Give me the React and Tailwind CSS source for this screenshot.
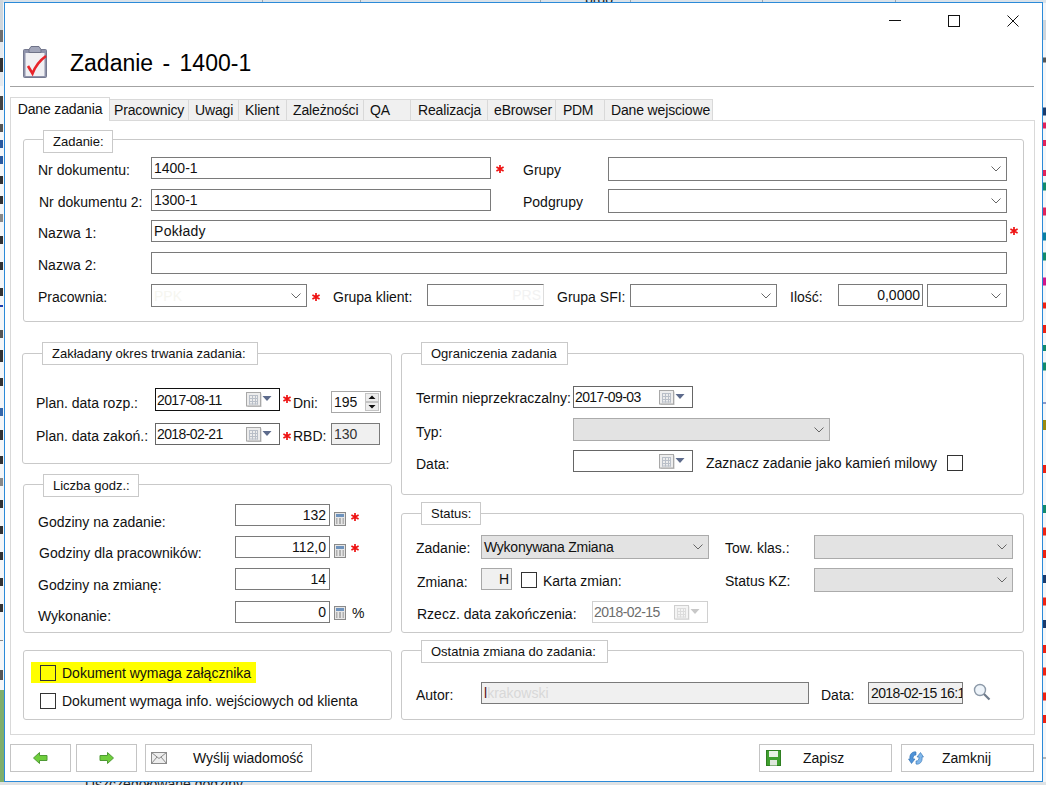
import React from "react";

const Chevron = ({ c = "#666" }) => (
  <svg width="10" height="6" viewBox="0 0 10 6" className="shrink-0"><path d="M0.5 0.5 L5 5 L9.5 0.5" fill="none" stroke={c} strokeWidth="1" /></svg>
);

const Box = ({ className = "", children }) => (
  <div className={"flex shrink-0 items-center overflow-hidden whitespace-nowrap border border-[#7a7a7a] pl-[2px] pr-[2px] " + className}>{children}</div>
);

const Select = ({ className = "", children }) => (
  <div className={"flex shrink-0 items-center justify-between border border-[#7a7a7a] pl-[2px] pr-[5px] " + className}>
    <span className="whitespace-nowrap">{children}</span>
    <Chevron />
  </div>
);

const GraySelect = ({ className = "", children }) => (
  <div className={"flex shrink-0 items-center justify-between border border-[#ababab] bg-[#e3e3e3] pl-[2px] pr-[5px] " + className}>
    <span className="whitespace-nowrap tracking-[-0.25px]">{children}</span>
    <Chevron />
  </div>
);

const Star = ({ className = "" }) => (
  <span className={"relative block h-[10px] w-[8px] shrink-0 " + className}>
    <svg width="8" height="8" viewBox="0 0 8 8" className="absolute left-0 top-[1px]">
      <path d="M4 0 V8 M0.4 2 L7.6 6 M7.6 2 L0.4 6" stroke="#ee1111" strokeWidth="1.7" />
    </svg>
  </span>
);

const Check = ({ className = "" }) => <span className={"block h-4 w-4 shrink-0 border border-[#333] " + className} />;

const CalIcon = ({ dim }) => (
  <svg width="26" height="15" viewBox="0 0 26 15" className="shrink-0">
    <rect x="1.5" y="1.5" width="14" height="13.5" fill={dim ? "#e8e8e8" : "#c4c4c4"} />
    <rect x="0.5" y="0.5" width="14" height="13.5" fill={dim ? "#f4f4f4" : "#ededed"} stroke={dim ? "#cfcfcf" : "#a8a8a8"} />
    <path d="M3 3.5 H12 M3 6.5 H12 M3 9.5 H12 M3 12 H12 M3.5 3 V12.5 M6.5 3 V12.5 M9.5 3 V12.5 M11.5 3 V12.5" stroke={dim ? "#dcdcdc" : "#b9bfc8"} strokeWidth="1" />
    <path d="M16.5 4 H25.5 L21 9 Z" fill={dim ? "#c8c8c8" : "#5d6b8c"} />
  </svg>
);

const DateBox = ({ className = "", children, dim }) => (
  <div className={"flex shrink-0 items-center justify-between border pl-[1px] pr-[7px] " + className}>
    <span className="whitespace-nowrap tracking-[-0.6px]">{children}</span>
    <CalIcon dim={dim} />
  </div>
);

const Calc = ({ className = "" }) => (
  <svg width="12" height="14" viewBox="0 0 12 14" className={"shrink-0 " + className}>
    <rect x="0.5" y="0.5" width="11" height="13" fill="#e6e6e6" stroke="#8a8a8a" />
    <rect x="2" y="2" width="8" height="3" fill="#6f93bd" />
    <path d="M2 7 H3.5 M5 7 H7 M8.5 7 H10 M2 9 H3.5 M5 9 H7 M8.5 9 H10 M2 11 H3.5 M5 11 H7 M8.5 11 H10" stroke="#7b7b7b" strokeWidth="1" />
  </svg>
);

const Group = ({ legend, legendClass = "", className = "", children }) => (
  <div className={"relative shrink-0 rounded-[3px] border border-[#c9c9c9] " + className}>
    <div className={"absolute flex h-[23px] items-center whitespace-nowrap border border-[#c9c9c9] bg-white pl-[9px] text-[13px] " + legendClass}>{legend}</div>
    {children}
  </div>
);

const Row = ({ className = "", children }) => <div className={"flex items-start " + className}>{children}</div>;

const tabs = [
  ["Pracownicy", "w-[79px] pl-[4px]"],
  ["Uwagi", "w-[50px] pl-[6px]"],
  ["Klient", "w-[48px] pl-[6px]"],
  ["Zależności", "w-[77px] pl-[6px]"],
  ["QA", "w-[47px] pl-[6px]"],
  ["Realizacja", "w-[77px] pl-[7px]"],
  ["eBrowser", "w-[68px] pl-[6px]"],
  ["PDM", "w-[49px] pl-[7px] tracking-[-0.3px]"],
  ["Dane wejsciowe", "w-[108px] pl-[6px]"],
];

const Btn = ({ className = "", children }) => (
  <div className={"relative flex h-[28px] shrink-0 items-center border border-[#c4c4c4] bg-white " + className}>{children}</div>
);

function Backdrop() {
  const left = [
    [0, 30, "#cfd6dc"], [30, 12, "#6e6e6e"], [42, 44, "#e4e9ee"], [58, 14, "#333"], [96, 14, "#444"],
    [124, 8, "#555"], [140, 8, "#2a5aa0"], [156, 8, "#2a5aa0"], [176, 8, "#333"], [196, 8, "#333"],
    [214, 8, "#888"], [236, 8, "#333"], [262, 8, "#333"], [288, 8, "#333"], [305, 2, "#1a3fb0"],
    [330, 8, "#555"], [350, 12, "#333"], [378, 8, "#333"], [408, 8, "#3366aa"], [430, 10, "#333"],
    [456, 8, "#333"], [478, 8, "#888"], [500, 8, "#333"], [526, 8, "#333"], [552, 8, "#333"],
    [578, 8, "#333"], [604, 8, "#333"], [640, 1, "#888"], [670, 10, "#555"],
  ];
  const right = [
    [0, 20, "#cfd6dc"], [30, 5, "#555"], [70, 8, "#1b3a6b"], [82, 6, "#e0225a"], [96, 6, "#e0225a"],
    [120, 6, "#e0225a"], [130, 8, "#138a6b"], [150, 8, "#e0225a"], [170, 8, "#0b7fa0"], [186, 8, "#138a6b"],
    [206, 8, "#d0158a"], [226, 6, "#ee2211"], [244, 8, "#ee2211"], [260, 6, "#138a6b"], [274, 8, "#138a6b"],
    [306, 1, "#223f9a"], [320, 10, "#9a8a10"], [356, 8, "#ee2211"], [388, 8, "#138a6b"], [406, 8, "#ee2211"],
    [424, 8, "#ee2211"], [444, 8, "#1b3a6b"], [462, 8, "#ee2211"], [480, 8, "#1b3a6b"], [500, 8, "#ee2211"],
    [518, 8, "#ee2211"], [538, 8, "#ee2211"], [556, 8, "#ee2211"], [590, 1, "#777"], [640, 2, "#666"],
  ];
  return (
    <svg width="1046" height="785" viewBox="0 0 1046 785" className="absolute left-0 top-0">
      <rect width="1046" height="785" fill="#f4f6f8" />
      <rect width="1046" height="3" fill="#d9e2ea" />
      <rect x="0" y="690" width="4" height="95" fill="#7fae6a" />
      {left.map(([y, h, c], i) => <rect key={i} x="0" y={y} width="3" height={h} fill={c} />)}
      {right.map(([y, h, c], i) => <rect key={i} x="1043" y={y * 1.25 + 20} width="3" height={h} fill={c} />)}
      {[262, 360, 540, 630, 762, 895].map((x) => <rect key={x} x={x} y="0" width="1" height="3" fill="#9aa5ae" />)}
      <rect x="0" y="782" width="1046" height="3" fill="#dfe2e4" />
    </svg>
  );
}

export default function App() {
  return (
    <div className="relative h-[785px] w-[1046px] overflow-hidden bg-white font-['Liberation_Sans',Arial,sans-serif] text-[14px] leading-4 text-[#111]">
      <Backdrop />
      <span className="absolute left-[85px] top-[776px] whitespace-nowrap text-[#222]">Uszczegółowane godziny</span>
      <span className="absolute left-[585px] top-[-9px] text-[#222]">brdo:</span>

      {/* window */}
      <div className="absolute left-[4px] top-[2px] flex h-[780px] w-[1039px] flex-col border border-[#2b8ad8] bg-white">
        {/* caption */}
        <div className="flex h-[36px] shrink-0 justify-end">
          {[
            <svg key="a" width="12" height="12" viewBox="0 0 12 12"><path d="M0 5.5 H12" stroke="#111" strokeWidth="1" /></svg>,
            <svg key="b" width="12" height="12" viewBox="0 0 12 12"><rect x="0.5" y="0.5" width="11" height="11" fill="none" stroke="#111" /></svg>,
            <svg key="c" width="12" height="12" viewBox="0 0 12 12"><path d="M0.5 0.5 L11.5 11.5 M11.5 0.5 L0.5 11.5" stroke="#111" strokeWidth="1" /></svg>,
          ].map((ic, i) => (
            <div key={i} className="flex w-[59px] items-center justify-center">{ic}</div>
          ))}
        </div>
        <div className="flex h-[47px] shrink-0 items-start pl-[18px] pt-[7px]">
          <svg width="24" height="32" viewBox="0 0 24 32" className="shrink-0">
            <rect x="0.5" y="3.5" width="23" height="28" rx="1" fill="#8f93ab" stroke="#75798f" />
            <rect x="2.5" y="7" width="19" height="23" fill="#f0f0f3" />
            <path d="M6 3.5 L8 0.5 H16 L18 3.5 V6.5 H6 Z" fill="#a2a6ba" stroke="#6f7388" />
            <path d="M5 20 L9.5 27.5 C12 21 16 15 23 10" fill="none" stroke="#e8242a" strokeWidth="2.6" />
          </svg>
          <h1 className="ml-[23px] mt-[1px] text-[23px] font-normal leading-8 text-black [word-spacing:3px]">Zadanie - 1400-1</h1>
        </div>
        <div className="ml-[5px] mr-[8px] h-px shrink-0 bg-[#a3a3a3]" />

        {/* tabs */}
        <div className="ml-[5px] mt-[10px] flex h-[23px] shrink-0 items-end tracking-[-0.15px]">
          <div className="relative z-10 -mb-px flex h-[24px] w-[100px] items-center justify-center border-x border-t border-[#d9d9d9] bg-white pb-[2px]">Dane zadania</div>
          {tabs.map(([t, w]) => (
            <div key={t} className={"flex h-[21px] items-center justify-start whitespace-nowrap border-r border-t border-[#d9d9d9] bg-[#f0f0f0] " + w}>{t}</div>
          ))}
        </div>

        {/* panel */}
        <div className="ml-[5px] h-[615px] w-[1025px] shrink-0 border border-[#d9d9d9] pl-[12px] pt-[18px]">
          <Group legend="Zadanie:" legendClass="-top-[10px] left-[19px] w-[70px]" className="h-[183px] w-[1001px] pl-[14px] pt-[17px]">
            <Row className="h-[32px]">
              <span className="mt-[5px] w-[113px] shrink-0">Nr dokumentu:</span>
              <Box className="h-[22px] w-[340px]">1400-1</Box>
              <Star className="ml-[5px] mt-[7px]" />
              <span className="ml-[19px] mt-[5px] w-[85px] shrink-0">Grupy</span>
              <Select className="h-[24px] w-[399px]" />
            </Row>
            <Row className="h-[31px]">
              <span className="ml-px mt-[5px] w-[112px] shrink-0">Nr dokumentu 2:</span>
              <Box className="h-[22px] w-[340px]">1300-1</Box>
              <span className="ml-[32px] mt-[5px] w-[85px] shrink-0">Podgrupy</span>
              <Select className="h-[24px] w-[399px]" />
            </Row>
            <Row className="h-[32px]">
              <span className="mt-[5px] w-[113px] shrink-0">Nazwa 1:</span>
              <Box className="h-[22px] w-[856px] tracking-[0.3px]">Pokłady</Box>
              <Star className="ml-[3px] mt-[6px]" />
            </Row>
            <Row className="h-[32px]">
              <span className="mt-[5px] w-[113px] shrink-0">Nazwa 2:</span>
              <Box className="h-[22px] w-[856px]" />
            </Row>
            <Row>
              <span className="mt-[5px] w-[113px] shrink-0">Pracownia:</span>
              <Select className="h-[23px] w-[156px]"><span className="text-[#f6f6f0]">PPK</span></Select>
              <Star className="ml-[5px] mt-[8px]" />
              <span className="ml-[13px] mt-[5px] w-[94px] shrink-0">Grupa klient:</span>
              <Box className="h-[22px] w-[117px] justify-end border-r-[#dddddd] text-[#f2f2f2]">PRS</Box>
              <span className="ml-[13px] mt-[5px] w-[73px] shrink-0">Grupa SFI:</span>
              <Select className="h-[23px] w-[147px]" />
              <span className="ml-[13px] mt-[5px] w-[48px] shrink-0">Ilość:</span>
              <Box className="h-[22px] w-[85px] justify-end">0,0000</Box>
              <Select className="ml-[4px] h-[23px] w-[80px]" />
            </Row>
          </Group>

          <div className="-ml-px mt-[31px] flex gap-[9px]">
            {/* left column */}
            <div className="flex w-[370px] shrink-0 flex-col">
              <Group legend="Zakładany okres trwania zadania:" legendClass="-top-[12px] left-[19px] w-[216px]" className="h-[111px] w-[370px] pl-[13px] pt-[34px]">
                <Row className="h-[35px]">
                  <span className="mt-[7px] w-[119px] shrink-0">Plan. data rozp.:</span>
                  <DateBox className="h-[23px] w-[125px] border-[#111]">2017-08-11</DateBox>
                  <Star className="ml-[3px] mt-[6px]" />
                  <span className="ml-[2px] mt-[7px] w-[38px] shrink-0">Dni:</span>
                  <div className="mt-[3px] flex h-[22px] w-[50px] shrink-0 items-center justify-between border border-[#a8a8a8] pl-[2px] pr-px">
                    <span>195</span>
                    <svg width="14" height="18" viewBox="0 0 14 18" className="shrink-0">
                      <rect x="0.5" y="0.5" width="13" height="8" fill="#ededed" stroke="#c4c4c4" />
                      <rect x="0.5" y="9.5" width="13" height="8" fill="#ededed" stroke="#c4c4c4" />
                      <path d="M7 2.5 L10.5 6 H3.5 Z M7 15.5 L10.5 12 H3.5 Z" fill="#111" />
                    </svg>
                  </div>
                </Row>
                <Row>
                  <span className="mt-[5px] w-[119px] shrink-0">Plan. data zakoń.:</span>
                  <DateBox className="h-[22px] w-[125px] border-[#666]">2018-02-21</DateBox>
                  <Star className="ml-[3px] mt-[8px]" />
                  <span className="ml-[2px] mt-[5px] w-[38px] shrink-0">RBD:</span>
                  <Box className="h-[22px] w-[49px] bg-[#f0f0f0] text-[#333]">130</Box>
                </Row>
              </Group>

              <Group legend="Liczba godz.:" legendClass="-top-[11px] left-[19px] w-[96px]" className="ml-px mt-[20px] h-[149px] w-[369px] pl-[14px] pt-[19px]">
                <Row className="h-[32px]">
                  <span className="mt-[10px] w-[197px] shrink-0">Godziny na zadanie:</span>
                  <Box className="h-[22px] w-[95px] justify-end pr-[3px]">132</Box>
                  <Calc className="ml-[4px] mt-[8px]" />
                  <Star className="ml-[5px] mt-[8px]" />
                </Row>
                <Row className="h-[32px]">
                  <span className="ml-px mt-[9px] w-[196px] shrink-0">Godziny dla pracowników:</span>
                  <Box className="h-[22px] w-[95px] justify-end pr-[3px]">112,0</Box>
                  <Calc className="ml-[4px] mt-[8px]" />
                  <Star className="ml-[5px] mt-[7px]" />
                </Row>
                <Row className="h-[33px]">
                  <span className="mt-[9px] w-[197px] shrink-0">Godziny na zmianę:</span>
                  <Box className="h-[22px] w-[95px] justify-end pr-[3px]">14</Box>
                </Row>
                <Row>
                  <span className="mt-[7px] w-[197px] shrink-0">Wykonanie:</span>
                  <Box className="h-[22px] w-[95px] justify-end pr-[3px]">0</Box>
                  <Calc className="ml-[4px] mt-[5px]" />
                  <span className="ml-[6px] mt-[4px]">%</span>
                </Row>
              </Group>

              <div className="ml-px mt-[17px] h-[70px] w-[369px] rounded-[3px] border border-[#c9c9c9] pl-[7px] pt-[11px]">
                <div className="flex h-[21px] w-[225px] items-center gap-[6px] bg-[#ffff00] pl-[9px]">
                  <Check />
                  <span className="whitespace-nowrap">Dokument wymaga załącznika</span>
                </div>
                <div className="mt-[7px] flex h-[21px] items-center gap-[6px] pl-[9px]">
                  <Check />
                  <span className="whitespace-nowrap">Dokument wymaga info. wejściowych od klienta</span>
                </div>
              </div>
            </div>

            {/* right column */}
            <div className="flex w-[623px] shrink-0 flex-col">
              <Group legend="Ograniczenia zadania" legendClass="-top-[12px] left-[19px] w-[147px]" className="h-[142px] w-[623px] pl-[14px] pt-[32px]">
                <Row className="h-[32px]">
                  <span className="mt-[4px] w-[157px] shrink-0 whitespace-nowrap">Termin nieprzekraczalny:</span>
                  <DateBox className="h-[22px] w-[120px] border-[#666]">2017-09-03</DateBox>
                </Row>
                <Row className="h-[32px]">
                  <span className="mt-[6px] w-[157px] shrink-0">Typ:</span>
                  <GraySelect className="h-[23px] w-[257px]" />
                </Row>
                <Row>
                  <span className="mt-[6px] w-[157px] shrink-0">Data:</span>
                  <DateBox className="h-[22px] w-[120px] border-[#666]" />
                  <span className="ml-[13px] mt-[5px] w-[241px] shrink-0 whitespace-nowrap">Zaznacz zadanie jako kamień milowy</span>
                  <Check className="mt-[5px]" />
                </Row>
              </Group>

              <Group legend="Status:" legendClass="-top-[12px] left-[19px] w-[60px]" className="mt-[18px] h-[120px] w-[623px] pl-[14px] pt-[21px]">
                <Row className="h-[33px]">
                  <span className="mt-[5px] w-[65px] shrink-0">Zadanie:</span>
                  <GraySelect className="h-[24px] w-[228px]">Wykonywana Zmiana</GraySelect>
                  <span className="ml-[16px] mt-[5px] w-[89px] shrink-0">Tow. klas.:</span>
                  <GraySelect className="h-[24px] w-[199px]" />
                </Row>
                <Row className="h-[33px]">
                  <span className="ml-px mt-[6px] w-[64px] shrink-0">Zmiana:</span>
                  <Box className="h-[22px] w-[31px] justify-end border-[#a8a8a8] bg-[#f0f0f0]">H</Box>
                  <Check className="ml-[9px] mt-[4px]" />
                  <span className="ml-[6px] mt-[5px] w-[182px] shrink-0">Karta zmian:</span>
                  <span className="mt-[5px] w-[89px] shrink-0">Status KZ:</span>
                  <GraySelect className="h-[24px] w-[199px]" />
                </Row>
                <Row>
                  <span className="ml-px mt-[5px] w-[175px] shrink-0 whitespace-nowrap">Rzecz. data zakończenia:</span>
                  <DateBox dim className="h-[22px] w-[116px] border-[#d0d0d0] text-[#6d6d6d]">2018-02-15</DateBox>
                </Row>
              </Group>

              <Group legend="Ostatnia zmiana do zadania:" legendClass="-top-[11px] left-[19px] w-[187px]" className="mt-[17px] h-[70px] w-[623px] pl-[14px] pt-[31px]">
                <Row>
                  <span className="mt-[5px] w-[65px] shrink-0">Autor:</span>
                  <Box className="h-[22px] w-[328px] bg-[#f0f0f0] text-[#d8d8d8]"><span className="text-[#5a1020]">l</span>krakowski</Box>
                  <span className="ml-[12px] mt-[5px] w-[47px] shrink-0">Data:</span>
                  <Box className="h-[22px] w-[95px] bg-[#f0f0f0] tracking-[-0.6px]">2018-02-15 16:1</Box>
                  <svg width="18" height="18" viewBox="0 0 18 18" className="ml-[10px] mt-[1px] shrink-0">
                    <circle cx="7" cy="7" r="5.5" fill="#eef4fa" stroke="#8c99a8" strokeWidth="1.4" />
                    <path d="M11 11 L16.5 16.5" stroke="#6f7c8c" strokeWidth="2.2" />
                  </svg>
                </Row>
              </Group>
            </div>
          </div>
        </div>

        {/* footer */}
        <div className="ml-[5px] mr-[8px] mt-[9px] flex shrink-0">
          <Btn className="w-[61px] justify-center">
            <svg width="15" height="12" viewBox="0 0 15 12"><path d="M0.5 6 L6.5 0.5 V3.5 H14 V8.5 H6.5 V11.5 Z" fill="#6fce3c" stroke="#4f9a35" /></svg>
          </Btn>
          <Btn className="ml-[5px] w-[61px] justify-center">
            <svg width="15" height="12" viewBox="0 0 15 12"><path d="M14.5 6 L8.5 0.5 V3.5 H1 V8.5 H8.5 V11.5 Z" fill="#6fce3c" stroke="#4f9a35" /></svg>
          </Btn>
          <Btn className="ml-[8px] w-[167px] pl-[5px]">
            <svg width="16" height="12" viewBox="0 0 16 12" className="shrink-0">
              <rect x="0.5" y="0.5" width="15" height="11" fill="#ededed" stroke="#8a8a8a" />
              <path d="M0.5 0.5 L8 6.5 L15.5 0.5 M0.5 11.5 L6 5 M15.5 11.5 L10 5" fill="none" stroke="#8a8a8a" />
            </svg>
            <span className="ml-[26px] whitespace-nowrap">Wyślij wiadomość</span>
          </Btn>
          <Btn className="ml-auto w-[133px] pl-[6px]">
            <svg width="15" height="16" viewBox="0 0 15 16" className="shrink-0">
              <rect x="0.5" y="0.5" width="14" height="15" fill="#3f9f2e" stroke="#2f7f22" />
              <rect x="3" y="1" width="9" height="6" fill="#e8f2e4" />
              <rect x="4" y="10" width="7" height="5.5" fill="#dfe8dc" />
            </svg>
            <span className="ml-[22px]">Zapisz</span>
          </Btn>
          <Btn className="ml-[9px] w-[133px] pl-[6px]">
            <svg width="16" height="16" viewBox="0 0 16 16" className="shrink-0">
              <path d="M2 9 C1 4 5 1 8 2 L8 5 C6 5 5 6 5 9 L7 9 L3.5 13.5 L0.5 9 Z" fill="#4f93d8" stroke="#2f6fb0" strokeWidth="0.6" />
              <path d="M14 7 C15 12 11 15 8 14 L8 11 C10 11 11 10 11 7 L9 7 L12.5 2.5 L15.5 7 Z" fill="#7fb6ea" stroke="#2f6fb0" strokeWidth="0.6" />
            </svg>
            <span className="ml-[18px]">Zamknij</span>
          </Btn>
        </div>
      </div>
    </div>
  );
}
